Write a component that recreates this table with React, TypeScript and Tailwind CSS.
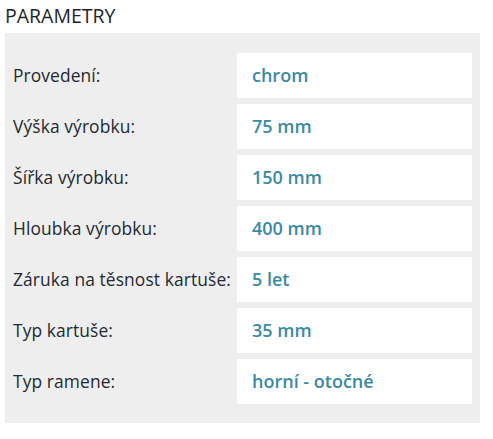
const rows: [string, string][] = [
  ['Provedení:', 'chrom'],
  ['Výška výrobku:', '75 mm'],
  ['Šířka výrobku:', '150 mm'],
  ['Hloubka výrobku:', '400 mm'],
  ['Záruka na těsnost kartuše:', '5 let'],
  ['Typ kartuše:', '35 mm'],
  ['Typ ramene:', 'horní - otočné'],
];

export default function App() {
  return (
    <div className="w-[493px] h-[439px] bg-white px-[5px] pt-[3px] font-['Open_Sans',sans-serif]">
      <h2 className="text-[19.5px] leading-[26px] text-[#1d2329] uppercase">Parametry</h2>
      <div className="mt-[4px] w-[475px] bg-[#eeeeee] pt-[20px] pb-[19px] pl-[8px] pr-[8px] flex flex-col gap-[6px]">
        {rows.map(([label, value]) => (
          <div key={label} className="flex h-[45px] items-center">
            <div className="w-[224px] text-[17.4px] tracking-[0.1px] text-[#1f2a33] whitespace-nowrap">{label}</div>
            <div className="flex-1 h-full bg-white flex items-center pl-[15px] text-[18px] font-semibold text-[#3a8aa3]">
              {value}
            </div>
          </div>
        ))}
      </div>
    </div>
  );
}
